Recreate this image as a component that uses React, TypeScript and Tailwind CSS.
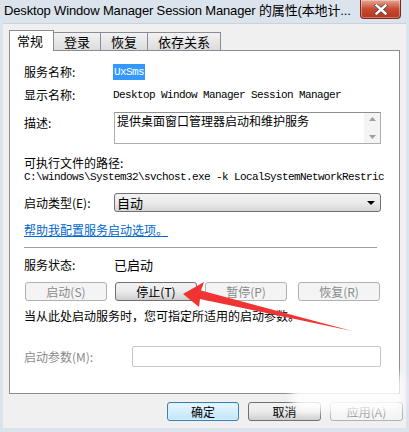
import React from 'react';

const cjk = "font-['Noto_Sans_CJK_SC','Noto_Sans_CJK_JP',sans-serif]";
const mono = "font-['Liberation_Mono','Noto_Sans_CJK_SC',monospace] text-[11px] tracking-[-0.6px]";

function Btn({ label, disabled, focused, className = '' }: { label: string; disabled?: boolean; focused?: boolean; className?: string }) {
  return (
    <div
      className={`flex h-[19px] items-center justify-center rounded-[3px] border text-[12px] leading-none ${
        disabled
          ? 'border-[#adb2b5] bg-[#f4f4f4] text-[#8a8a8a]'
          : focused
          ? 'border-[#3c7fb1] bg-gradient-to-b from-[#eaf6fd] to-[#bee6fd] text-black shadow-[inset_0_0_0_1px_#d9f0fc]'
          : 'border-[#707070] bg-gradient-to-b from-[#f2f2f2] via-[#ebebeb] to-[#cfcfcf] text-black'
      } ${className}`}
    >
      {label}
    </div>
  );
}

function Tab({ label, active }: { label: string; active?: boolean }) {
  return (
    <div
      className={`flex items-center border border-b-0 border-[#898c95] text-[13px] ${
        active
          ? 'relative z-10 -mb-px h-[21px] bg-white pl-[7px] pr-[10px]'
          : '-ml-px mt-[2px] h-[18px] bg-gradient-to-b from-[#f2f2f2] to-[#dcdcdc] px-[10px]'
      }`}
    >
      {label}
    </div>
  );
}

export default function App() {
  return (
    <div className={`relative h-[432px] w-[409px] overflow-hidden bg-[#dbe3ec] ${cjk} text-black`}>
      {/* Title bar */}
      <div className="flex h-[23px] items-start justify-between">
        <div className="pl-[4px] pt-[3px] font-['Liberation_Sans','Noto_Sans_CJK_SC',sans-serif] text-[13px] leading-[16px] tracking-[-0.15px] text-black">
          Desktop Window Manager Session Manager 的属性(本地计...
        </div>
        <div className="mr-[8px] flex h-[19px] w-[41px] items-center justify-center rounded-b-[4px] border border-t-0 border-[#7a2a1d] bg-gradient-to-b from-[#e8a493] via-[#c74a30] to-[#b8321c] shadow-[inset_0_0_0_1px_rgba(255,255,255,0.35)]">
          <svg width="14" height="11" viewBox="0 0 14 11">
            <path d="M2.5 1.5 L11.5 9.5 M11.5 1.5 L2.5 9.5" stroke="#4a4a4a" strokeWidth="3.8" strokeLinecap="square" />
            <path d="M2.5 1.5 L11.5 9.5 M11.5 1.5 L2.5 9.5" stroke="#ffffff" strokeWidth="2.4" strokeLinecap="square" />
          </svg>
        </div>
      </div>

      {/* Window body */}
      <div className="mx-[3px] flex h-[405px] flex-col border-t border-[#c9d3de] bg-[#f0f0f0] pl-[6px] pr-[3px]">
        {/* Tabs */}
        <div className="mt-[6px] flex items-start">
          <Tab label="常规" active />
          <Tab label="登录" />
          <Tab label="恢复" />
          <Tab label="依存关系" />
        </div>

        {/* Panel */}
        <div className="flex h-[344px] w-[391px] flex-col border border-[#898c95] bg-white pl-[14px] text-[12px] leading-[16px]">
          <div className="mt-[13px] flex h-[16px]">
            <div className="w-[89px]">服务名称:</div>
            <div className={`${mono} bg-[#3399ff] px-[1px] text-white`}>UxSms</div>
          </div>
          <div className="mt-[7px] flex h-[16px]">
            <div className="w-[89px]">显示名称:</div>
            <div className={mono}>Desktop Window Manager Session Manager</div>
          </div>
          <div className="mt-[9px] flex h-[32px]">
            <div className="w-[90px] pt-[3px]">描述:</div>
            <div className="flex h-[32px] w-[267px] border border-[#abadb3] border-t-[#8d9196]">
              <div className="flex-1 pl-[2px] leading-[16px]">提供桌面窗口管理器启动和维护服务</div>
              <div className="flex w-[16px] flex-col items-center justify-between bg-[#f4f4f4] py-[4px]">
                <svg width="7" height="4" viewBox="0 0 7 4"><path d="M0 4 L3.5 0 L7 4 Z" fill="#a0a0a0" /></svg>
                <svg width="7" height="4" viewBox="0 0 7 4"><path d="M0 0 L3.5 4 L7 0 Z" fill="#a0a0a0" /></svg>
              </div>
            </div>
          </div>
          <div className="mt-[12px] h-[14px] leading-[14px]">可执行文件的路径:</div>
          <div className={`${mono} h-[14px] w-[362px] whitespace-nowrap leading-[14px]`}>
            C:\windows\System32\svchost.exe -k LocalSystemNetworkRestric
          </div>
          <div className="mt-[9px] flex h-[19px] items-center">
            <div className="w-[90px]">启动类型(E):</div>
            <div className="flex h-[19px] w-[267px] items-center justify-between rounded-[3px] border border-[#707070] bg-gradient-to-b from-[#f2f2f2] via-[#ebebeb] to-[#d6d6d6] pl-[2px] pr-[5px] text-[13px]">
              <span>自动</span>
              <svg width="8" height="4" viewBox="0 0 8 4"><path d="M0 0 L8 0 L4 4 Z" fill="#000" /></svg>
            </div>
          </div>
          <div className="mt-[10px] h-[16px] text-[#0066cc] underline">帮助我配置服务启动选项。</div>
          <div className="mt-[9px] h-px w-[353px] bg-[#a0a0a0]" />
          <div className="mt-[9px] flex h-[16px]">
            <div className="w-[90px]">服务状态:</div>
            <div className="text-[13px]">已启动</div>
          </div>
          <div className="mt-[9px] flex h-[19px] pl-[1px]">
            <Btn label="启动(S)" disabled className="w-[82px]" />
            <Btn label="停止(T)" className="ml-[8px] w-[82px]" />
            <Btn label="暂停(P)" disabled className="ml-[8px] w-[82px]" />
            <Btn label="恢复(R)" disabled className="ml-[11px] w-[82px]" />
          </div>
          <div className="mt-[7px] h-[16px]">当从此处启动服务时，您可指定所适用的启动参数。</div>
          <div className="mt-[22px] flex h-[21px] items-center">
            <div className="w-[108px] text-[#8a8a8a]">启动参数(M):</div>
            <div className="h-[21px] w-[249px] rounded-[2px] border border-[#c2c5c9] bg-white" />
          </div>
        </div>

        {/* Bottom buttons */}
        <div className="mt-[8px] flex justify-end">
          <Btn label="确定" focused className="w-[72px]" />
          <Btn label="取消" className="ml-[9px] w-[73px]" />
          <Btn label="应用(A)" disabled className="ml-[9px] w-[73px]" />
        </div>
      </div>

      {/* Watermark blur */}
      <div className="pointer-events-none absolute left-[292px] top-[372px] h-[40px] w-[112px] rounded-[12px] bg-white/85 blur-[4px]" />

      {/* Red arrow */}
      <svg className="pointer-events-none absolute left-0 top-0" width="409" height="432" viewBox="0 0 409 432">
        <path d="M183 294 L204 282 L201 290.5 L352 331 L200 299 L199 307 Z" fill="#f03434" />
      </svg>
    </div>
  );
}
